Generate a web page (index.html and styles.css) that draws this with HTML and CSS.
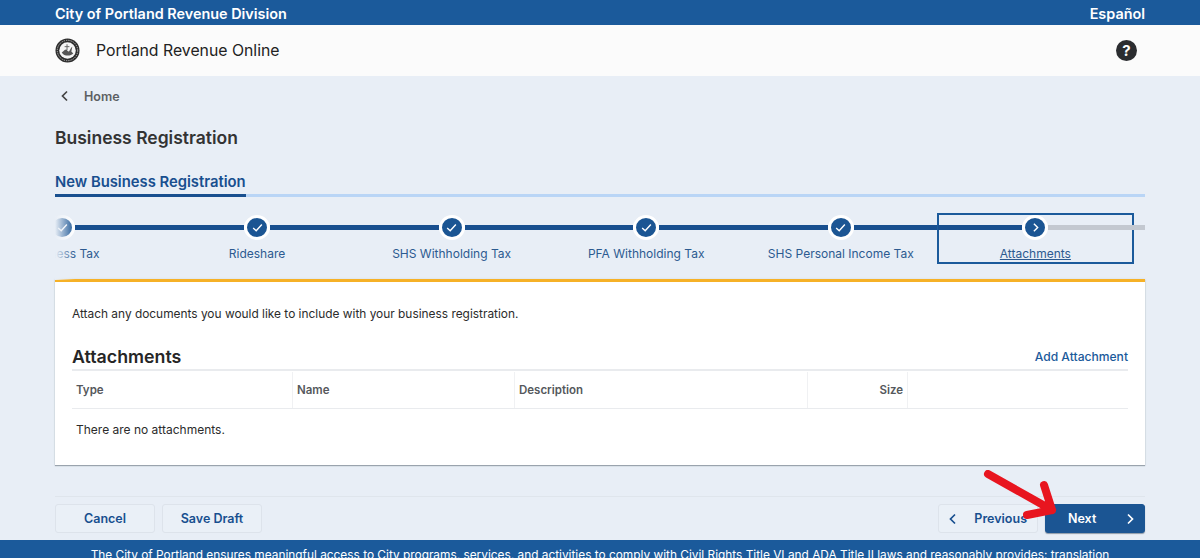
FILE: index.html
```html
<!DOCTYPE html>
<html lang="en">
<head>
<meta charset="utf-8">
<title>Portland Revenue Online</title>
<link rel="stylesheet" href="styles.css">
</head>
<body>
<div class="page">
  <div class="topbar">
    <span>City of Portland Revenue Division</span>
    <span>Español</span>
  </div>
  <header class="header">
    <div class="brand">
      <svg class="seal" viewBox="0 0 26 26" aria-hidden="true">
        <circle cx="13" cy="13" r="12.5" fill="#2c2c2c"/>
        <circle cx="13" cy="13" r="10.6" fill="none" stroke="#d8d8d8" stroke-width=".8" stroke-dasharray="1.4 1"/>
        <circle cx="13" cy="13" r="8.6" fill="#f4f4f4"/>
        <path d="M7 15c2-1 3-3 4.500-3s1 2 2.500 2 2-4 4-5l-1 5 2 2c-2 2.500-9 4-12-1z" fill="#555"/>
        <path d="M12.500 6.500v6M10 9h5" stroke="#666" stroke-width="1"/>
      </svg>
      <span class="brand-name">Portland Revenue Online</span>
    </div>
    <span class="help">?</span>
  </header>
  <main class="main">
    <nav class="crumb">
      <svg class="crumb-icon" viewBox="0 0 10 12" aria-hidden="true"><path d="M7 1.500 2.500 6 7 10.500" fill="none" stroke="#444" stroke-width="1.700"/></svg>
      <span>Home</span>
    </nav>
    <h1 class="title">Business Registration</h1>
    <div class="tabs"><span class="tab">New Business Registration</span></div>
    <div class="stepper">
      <ol class="steps">
        <li class="step"><span class="dot"><svg viewBox="0 0 12 12"><path d="M2 6.500 4.800 9 10 3.300"/></svg></span><span class="label">Business Tax</span></li>
        <li class="step"><span class="dot"><svg viewBox="0 0 12 12"><path d="M2 6.500 4.800 9 10 3.300"/></svg></span><span class="label">Rideshare</span></li>
        <li class="step"><span class="dot"><svg viewBox="0 0 12 12"><path d="M2 6.500 4.800 9 10 3.300"/></svg></span><span class="label">SHS Withholding Tax</span></li>
        <li class="step"><span class="dot"><svg viewBox="0 0 12 12"><path d="M2 6.500 4.800 9 10 3.300"/></svg></span><span class="label">PFA Withholding Tax</span></li>
        <li class="step"><span class="dot"><svg viewBox="0 0 12 12"><path d="M2 6.500 4.800 9 10 3.300"/></svg></span><span class="label">SHS Personal Income Tax</span></li>
        <li class="step current"><span class="dot"><svg viewBox="0 0 12 12"><path d="M4.500 2.500 8 6 4.500 9.500"/></svg></span><span class="label">Attachments</span></li>
      </ol>
      <div class="fade"></div>
    </div>
    <section class="card">
      <p class="intro">Attach any documents you would like to include with your business registration.</p>
      <div class="card-head">
        <h2>Attachments</h2>
        <a class="add" href="#">Add Attachment</a>
      </div>
      <div class="table-head">
        <span class="th">Type</span>
        <span class="th">Name</span>
        <span class="th">Description</span>
        <span class="th right">Size</span>
        <span class="th end"></span>
      </div>
      <p class="empty">There are no attachments.</p>
    </section>
    <div class="actions">
      <div class="group">
        <button class="btn">Cancel</button>
        <button class="btn">Save Draft</button>
      </div>
      <div class="group">
        <button class="btn prev">
          <svg viewBox="0 0 10 12" aria-hidden="true"><path d="M7 1.500 2.500 6 7 10.500"/></svg>
          <span>Previous</span>
        </button>
        <button class="btn next">
          <span>Next</span>
          <svg viewBox="0 0 10 12" aria-hidden="true"><path d="M3 1.500 7.500 6 3 10.500"/></svg>
        </button>
      </div>
    </div>
  </main>
  <footer class="footer">
    The City of Portland ensures meaningful access to City programs, services, and activities to comply with Civil Rights Title VI and ADA Title II laws and reasonably provides: translation
  </footer>
  <svg class="arrow" viewBox="0 0 90 60" aria-hidden="true">
    <path d="M8 4 L72 40 M64 15 L72 40 L47 45" fill="none" stroke="#e8151f" stroke-width="8" stroke-linecap="round" stroke-linejoin="round"/>
  </svg>
</div>
</body>
</html>
```

FILE: styles.css
```css
* { box-sizing: border-box; }
html, body { margin: 0; padding: 0; }
body {
  font-family: Inter, "Liberation Sans", sans-serif;
  background: #e8eef6;
  color: #2b2b2b;
}
.page {
  position: relative;
  width: 1200px;
  height: 558px;
  overflow: hidden;
  display: flex;
  flex-direction: column;
}
.topbar {
  height: 25px;
  flex: none;
  background: #1b5a9b;
  color: #fff;
  font-size: 14.400px;
  font-weight: 600;
  line-height: 27px;
  padding: 0 55px;
  display: flex;
  justify-content: space-between;
}
.header {
  height: 51px;
  flex: none;
  background: #fbfbfb;
  padding: 0 63px 0 55px;
  display: flex;
  align-items: center;
  justify-content: space-between;
}
.brand { display: flex; align-items: center; gap: 16px; }
.seal { width: 25px; height: 25px; display: block; }
.brand-name { font-size: 15.800px; line-height: 22px; padding-top: 1px; color: #222; }
.help {
  width: 21px;
  height: 21px;
  border-radius: 50%;
  background: #2b2d30;
  color: #fff;
  font-size: 15px;
  font-weight: 700;
  line-height: 21px;
  text-align: center;
}
.main {
  flex: 1;
  min-height: 0;
  padding: 0 55px;
  display: flex;
  flex-direction: column;
}
.crumb {
  height: 40px;
  display: flex;
  align-items: center;
  gap: 14px;
  padding-left: 5px;
  font-size: 12.500px;
  font-weight: 600;
  color: #5c5f63;
}
.crumb-icon { width: 10px; height: 12px; display: block; }
.title {
  margin: 10px 0 0;
  height: 24px;
  font-size: 17.500px;
  line-height: 24px;
  font-weight: 600;
  color: #333;
}
.tabs {
  margin-top: 20px;
  height: 27px;
  border-bottom: 3px solid #b9d5f6;
  display: flex;
}
.tab {
  height: 27px;
  border-bottom: 3px solid #184f8f;
  font-size: 14.800px;
  font-weight: 600;
  line-height: 24px;
  color: #184f8f;
}
.stepper {
  position: relative;
  height: 69px;
  margin-top: 14px;
  overflow: hidden;
}
.steps {
  list-style: none;
  margin: 0 0 0 -89.900px;
  padding: 3px 0 0;
  display: flex;
  width: 1400px;
}
.step {
  position: relative;
  width: 194.600px;
  height: 49px;
  flex: none;
  display: flex;
  flex-direction: column;
  align-items: center;
}
.step::before, .step::after {
  content: "";
  position: absolute;
  top: 11px;
  height: 5px;
  background: #184f8f;
}
.step::before { left: 0; right: calc(50% + 13px); }
.step::after { left: calc(50% + 13px); right: 0; }
.step.current { outline: 2px solid #1b5a9b; outline-offset: -1px; }
.step.current::after {
  background: #c3c8d0;
  right: -110px;
}
.dot {
  width: 26px;
  height: 26px;
  margin-top: .500px;
  border: 3px solid #fff;
  border-radius: 50%;
  background: #1b5593;
  display: flex;
  align-items: center;
  justify-content: center;
}
.dot svg {
  width: 13px;
  height: 13px;
  fill: none;
  stroke: #fff;
  stroke-width: 1.300;
}
.label {
  margin-top: 5.500px;
  font-size: 12px;
  line-height: 18px;
  color: #2c5a90;
  white-space: nowrap;
}
.current .label { text-decoration: underline; }
.fade {
  position: absolute;
  left: 0;
  top: 0;
  bottom: 0;
  width: 20px;
  background: linear-gradient(to right, #e8eef6, rgba(232, 238, 246, 0));
}
.card {
  height: 186px;
  flex: none;
  background: #fff;
  border-top: 3px solid #f6b127;
  box-shadow: 0 1px 1px #9aa3ad, 0 0 2px #d4dbe4;
  padding: 0 17px;
  margin-top: -1px;
}
.intro {
  margin: 24px 0 0;
  font-size: 11.900px;
  line-height: 16px;
  color: #2b2b2b;
}
.card-head {
  margin-top: 23px;
  height: 26px;
  border-bottom: 2px solid #e9ebee;
  display: flex;
  justify-content: space-between;
  align-items: flex-start;
}
.card-head h2 {
  margin: 0;
  font-size: 17.800px;
  line-height: 24px;
  font-weight: 600;
  color: #262626;
}
.add {
  font-size: 12.100px;
  line-height: 24px;
  font-weight: 500;
  color: #1b5a9b;
  text-decoration: none;
}
.table-head {
  height: 38px;
  border-bottom: 1.500px solid #e9ebee;
  display: grid;
  grid-template-columns: 221px 222px 293px 100px 1fr;
  align-items: stretch;
}
.th {
  font-size: 11.500px;
  font-weight: 600;
  line-height: 36px;
  color: #55585c;
  padding: 0 4px;
  border-right: 1.500px solid #f0f1f3;
  margin-top: 1px;
  margin-bottom: 1px;
}
.th.right { text-align: right; }
.th.end { border-right: 0; }
.empty {
  margin: 12px 0 0 4px;
  font-size: 12px;
  line-height: 18px;
  color: #2b2b2b;
}
.actions {
  margin-top: 31px;
  padding-top: 7px;
  border-top: 1px solid #dfe5ec;
  display: flex;
  justify-content: space-between;
}
.group { display: flex; gap: 7px; }
.btn {
  width: 100px;
  height: 29px;
  font: 600 12.500px Inter, "Liberation Sans", sans-serif;
  color: #184f8f;
  background: #eaf0f7;
  border: 1px solid #dde3eb;
  border-radius: 3px;
  padding: 0;
}
.btn svg {
  width: 10px;
  height: 12px;
  fill: none;
  stroke: currentColor;
  stroke-width: 1.700;
  display: block;
}
.prev, .next {
  display: flex;
  align-items: center;
  justify-content: space-between;
}
.prev { width: 100px; padding: 0 10px 0 9px; }
.next {
  background: #1b5593;
  border-color: #1b5593;
  color: #fff;
  padding: 0 9px 0 22px;
  box-shadow: 0 1px 1px #8d99a8;
}
.footer {
  height: 18px;
  flex: none;
  overflow: hidden;
  background: #1b5a9b;
  color: #fff;
  font-size: 11.870px;
  line-height: 16px;
  padding-top: 7px;
  text-align: center;
  white-space: nowrap;
}
.arrow {
  position: absolute;
  left: 980px;
  top: 470px;
  width: 90px;
  height: 60px;
}
```
